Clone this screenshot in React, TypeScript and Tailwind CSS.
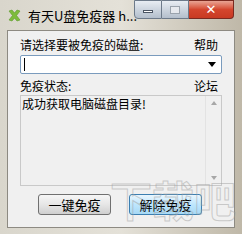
import React from "react";

const font = { fontFamily: '"Noto Sans CJK SC", "Noto Sans", sans-serif' };

const AppIcon = () => (
  <svg width="13" height="13" viewBox="0 0 13 13">
    <path d="M1 2 L4 1 L6.5 4 L9 1 L12 2 L8.5 6.5 L12 11 L9 12 L6.5 9 L4 12 L1 11 L4.5 6.5 Z" fill="#7dbb3c" stroke="#5a9a2a" strokeWidth="0.6" />
  </svg>
);

const CaptionButtons = () => (
  <div className="absolute top-0 right-[8px] flex h-[19px]">
    <div className="w-[28px] h-full border border-[#6d7a8a] rounded-bl-[4px] bg-gradient-to-b from-[#e8edf3] via-[#cdd5df] to-[#b4bfcc] flex items-center justify-center">
      <div className="w-[10px] h-[3px] bg-white border border-[#4b5563] mt-[4px]" />
    </div>
    <div className="w-[27px] h-full border-y border-r border-[#6d7a8a] bg-gradient-to-b from-[#e8edf3] via-[#cdd5df] to-[#b4bfcc] flex items-center justify-center">
      <div className="w-[10px] h-[8px] border border-[#9aa3ad] bg-[#e6e9ee]" />
    </div>
    <div className="w-[45px] h-full border-y border-r border-[#7a2a20] rounded-br-[4px] bg-gradient-to-b from-[#e8a393] via-[#d4462e] to-[#c83a22] flex items-center justify-center">
      <span className="text-white text-[13px] font-bold leading-none" style={{ fontFamily: '"DejaVu Sans", sans-serif' }}>✕</span>
    </div>
  </div>
);

export default function App() {
  return (
    <div className="relative w-[242px] h-[234px] overflow-hidden flex flex-col bg-gradient-to-r from-[#d9d6cc] via-[#e4e1d8] to-[#bfb8a8]" style={font}>
      <div className="relative h-[30px] flex items-center pl-[8px] shrink-0">
        <AppIcon />
        <span className="ml-[7px] text-[13px] text-black leading-none">有天U盘免疫器 h...</span>
        <CaptionButtons />
      </div>

      <div className="mx-[7px] mb-[6px] flex-1 bg-[#f0f0f0] border border-[#8d8a82] flex flex-col px-[12px] text-[12px] text-black">
        <div className="flex justify-between items-center h-[12px] mt-[8px] pr-[4px] leading-none">
          <span>请选择要被免疫的磁盘:</span>
          <span>帮助</span>
        </div>
        <div className="mt-[4px] h-[19px] bg-white border border-[#7a9bbd] rounded-[2px] flex items-center justify-between px-[3px]">
          <div className="w-[1px] h-[13px] bg-black" />
          <svg width="8" height="5" viewBox="0 0 8 5" className="mr-[2px]">
            <path d="M0 0 H8 L4 5 Z" fill="#000" />
          </svg>
        </div>
        <div className="flex justify-between items-center h-[12px] mt-[6px] pr-[4px] leading-none">
          <span>免疫状态:</span>
          <span>论坛</span>
        </div>
        <div className="mt-[3px] h-[91px] bg-[#f0f0f0] border border-[#c9c9c9] flex">
          <div className="flex-1 pl-[1px] pt-[1px] leading-[14px]">成功获取电脑磁盘目录!</div>
          <div className="w-[16px] bg-[#f0f0f0] border-l border-[#e3e3e3] flex flex-col justify-between items-center py-[5px]">
            <svg width="6" height="4" viewBox="0 0 6 4">
              <path d="M0 4 L3 0 L6 4 Z" fill="#a7a7a7" />
            </svg>
            <svg width="6" height="4" viewBox="0 0 6 4">
              <path d="M0 0 H6 L3 4 Z" fill="#a7a7a7" />
            </svg>
          </div>
        </div>
        <div className="mt-[8px] flex pl-[18px] gap-[18px]">
          <button className="w-[73px] h-[21px] rounded-[3px] border border-[#707070] bg-gradient-to-b from-[#f6f6f6] via-[#e6e6e6] to-[#cfcfcf] text-[13px] leading-none" style={font}>
            一键免疫
          </button>
          <button className="w-[73px] h-[21px] rounded-[3px] border border-[#3c7fb1] bg-gradient-to-b from-[#eaf6fd] via-[#bee6fd] to-[#a7d9f5] text-[13px] leading-none" style={font}>
            解除免疫
          </button>
        </div>
      </div>

      <div className="absolute right-[6px] bottom-[14px] text-[42px] font-bold leading-none text-transparent pointer-events-none select-none" style={{ WebkitTextStroke: "1px rgba(160,160,160,0.5)", fontFamily: '"Noto Sans CJK SC", sans-serif' }}>
        下载吧
      </div>
    </div>
  );
}
